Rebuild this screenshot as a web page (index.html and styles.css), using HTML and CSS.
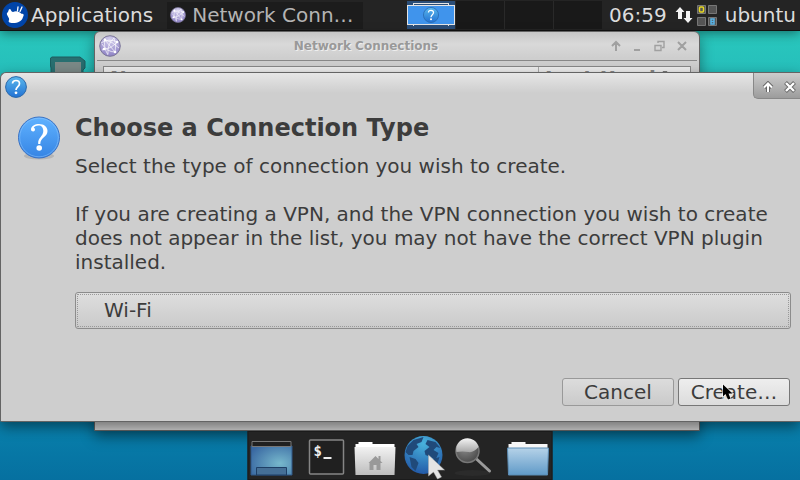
FILE: index.html
```html
<!DOCTYPE html>
<html lang="en">
<head>
<meta charset="utf-8">
<title>Choose a Connection Type</title>
<link rel="stylesheet" href="styles.css">
</head>
<body>
<svg class="defs" aria-hidden="true">
  <defs>
    <linearGradient id="blue" x1="0" y1="0" x2="0" y2="1"><stop offset="0" stop-color="#60b2ff"/><stop offset="1" stop-color="#3584e4"/></linearGradient>
    <linearGradient id="sky" x1="0" y1="0" x2="0" y2="1"><stop offset="0" stop-color="#5bb8ec"/><stop offset="1" stop-color="#2272d4"/></linearGradient>
    <radialGradient id="violet" cx=".5" cy=".2" r=".8"><stop offset="0" stop-color="#d5d0ee"/><stop offset="1" stop-color="#8d81c4"/></radialGradient>
    <radialGradient id="screen" cx=".7" cy=".6" r=".8"><stop offset="0" stop-color="#77b8cc"/><stop offset="1" stop-color="#3968a2"/></radialGradient>
    <linearGradient id="paper" x1="0" y1="0" x2="0" y2="1"><stop offset="0" stop-color="#f2f2f2"/><stop offset="1" stop-color="#bdbdbd"/></linearGradient>
    <linearGradient id="folder" x1="0" y1="0" x2="0" y2="1"><stop offset="0" stop-color="#b5d2e8"/><stop offset="1" stop-color="#609ac8"/></linearGradient>
    <radialGradient id="ocean" cx=".5" cy=".2" r=".8"><stop offset="0" stop-color="#48b2dc"/><stop offset="1" stop-color="#235aa8"/></radialGradient>
    <radialGradient id="lens" cx=".4" cy=".35" r=".7"><stop offset="0" stop-color="#8c8c8c"/><stop offset="1" stop-color="#484848"/></radialGradient>
    <linearGradient id="glare" x1="0" y1="0" x2="0" y2="1"><stop offset="0" stop-color="#f4f4f4"/><stop offset="1" stop-color="#a6a6a6"/></linearGradient>
    <symbol id="question" viewBox="0 0 44 44">
      <ellipse cx="22" cy="40" rx="15" ry="3.500" fill="#000" opacity=".12"/>
      <circle cx="22" cy="21.500" r="20.500" fill="url(#blue)" stroke="#3a72c4"/>
      <circle cx="22" cy="21.500" r="19.300" fill="none" stroke="#8fc8ff" stroke-opacity=".5"/>
      <path d="M14 13.500C14 10 18 8 22 8C27 8 30.500 10.800 30.500 15C30.500 21 23.300 21.500 23.300 28H21.200C20.500 21.500 26.300 20.500 26.300 15C26.300 11.500 24.500 9.500 21.500 9.500C19 9.500 17.200 10.600 16.700 11.800C18.500 12 18.500 15.500 16.200 15.500C14.900 15.500 14 14.600 14 13.500Z" fill="#fff"/>
      <circle cx="22.200" cy="32" r="2.800" fill="#fff"/>
    </symbol>
    <symbol id="question-small" viewBox="0 0 22 22">
      <circle cx="11" cy="11" r="10.400" fill="url(#sky)" stroke="#2a68aa"/>
      <path d="M7.500 7.500C7.500 3.500 14.500 3.500 14.500 7.700C14.500 10.500 11 10.700 11 14" fill="none" stroke="#fff" stroke-width="1.700"/>
      <circle cx="11" cy="16.800" r="1.400" fill="#fff"/>
    </symbol>
    <symbol id="network" viewBox="0 0 22 22">
      <circle cx="11" cy="11" r="10.300" fill="url(#violet)" stroke="#7c7799"/>
      <g fill="none" stroke="#fff" stroke-opacity=".85" stroke-width=".8"><path d="M2 8Q9 3 19 7M6 3Q4 12 9 20M3 15Q12 14 19 7M6 5L16 17M15 3Q18 10 16 17M3 9Q8 17 16 17M6 5Q13 6 20 13M9 19Q8 9 15 3"/></g>
      <g fill="#fff"><circle cx="6" cy="5" r="1.300"/><circle cx="18" cy="7" r="1.300"/><circle cx="16" cy="17" r="1.300"/><circle cx="5" cy="14" r="1.300"/></g>
    </symbol>
  </defs>
</svg>

<header class="panel">
  <button class="menu-button">
    <svg class="logo" viewBox="0 0 26 26" aria-hidden="true"><circle cx="13" cy="13" r="13" fill="#0044a8"/><path d="M5 11C7 10 6 7 8 7C9 7 9 10 11 10C13 9 15 9 17 10L20 12C22 11 22 14 21 15C20 19 16 21 11 21C7 21 6 20 7 18C8 16 4 13 5 11Z" fill="#fff"/><path d="M15.500 9L16 5M18 9.500L20 5" stroke="#fff" stroke-width="1.300" stroke-linecap="round"/></svg>
    <span>Applications</span>
  </button>
  <button class="task"><svg class="task-icon" aria-hidden="true"><use href="#network"/></svg><span>Network Conn…</span></button>
  <div class="status">
    <nav class="pager" aria-label="Workspaces">
      <button class="workspace current" aria-label="Workspace 1"><span class="mini"><svg class="mini-icon" aria-hidden="true"><use href="#question-small"/></svg></span></button>
      <button class="workspace" aria-label="Workspace 2"></button>
      <button class="workspace" aria-label="Workspace 3"></button>
      <button class="workspace" aria-label="Workspace 4"></button>
    </nav>
    <time class="clock">06:59</time>
    <div class="tray">
      <svg class="arrows" viewBox="0 0 18 18" aria-hidden="true"><path d="M5 1L9.500 6H7V13H3V6H.5ZM13 17L8.500 12H11V5H15V12H17.500Z" fill="#f2f2f2"/></svg>
      <svg class="lights" viewBox="0 0 20 21" aria-hidden="true"><g fill="#555" stroke="#777"><path d="M.5.5h8v8h-8zM11.500.5h8v8h-8zM.5 12.500h8v8h-8zM11.500 12.500h8v8h-8z"/></g><rect x="2.500" y="2" width="4" height="5" rx="1" fill="none" stroke="#e8d820" stroke-width="1.500"/><path d="M14 14v5h3v-5zM14 16.500h3" fill="none" stroke="#58b4e8" stroke-width="1.500"/></svg>
    </div>
    <button class="user">ubuntu</button>
  </div>
</header>

<main class="desktop">
  <svg class="card" viewBox="0 0 36 44" aria-hidden="true"><path d="M2 1H30L35 5V12L33 14V43H1V12L.5 10V2Z" fill="#286f70" stroke="#1c5c5e"/><path d="M5 6H31V43H5Z" fill="#7b8987"/></svg>

  <section class="window back" aria-label="Network Connections">
    <div class="back-bar">
      <svg class="net-icon" aria-hidden="true"><use href="#network"/></svg>
      <h2 class="back-title">Network Connections</h2>
      <svg class="back-controls" viewBox="0 0 76 12" aria-hidden="true"><g fill="none" stroke="#a0a0a0" stroke-width="2"><path d="M5 11V3M1 6L5 2L9 6M23 10H29M67 2L75 10M75 2L67 10"/><path d="M44 5.500H50V10.500H44ZM47 3V1.500H53V7.500H51" stroke-width="1.400"/></g></svg>
    </div>
    <div class="back-list"><span>Name</span><span>Last Used <svg class="sort" viewBox="0 0 10 8" aria-hidden="true"><path d="M3 0H7L10 8H0Z" fill="#777"/></svg></span></div>
  </section>

  <section class="window dialog" role="dialog" aria-labelledby="heading">
    <div class="title-bar">
      <svg class="bar-icon" aria-hidden="true"><use href="#question-small"/></svg>
      <div class="controls">
        <button aria-label="Shade"><svg viewBox="0 0 12 12"><path d="M6 11V3M2 6.500L6 2.500L10 6.500" fill="none" stroke="#666" stroke-width="4"/><path d="M6 11V3M2 6.500L6 2.500L10 6.500" fill="none" stroke="#fff" stroke-width="2"/></svg></button>
        <button aria-label="Close"><svg viewBox="0 0 12 12"><path d="M1.500 1.500L10.500 10.500M10.500 1.500L1.500 10.500" fill="none" stroke="#666" stroke-width="4"/><path d="M2 2L10 10M10 2L2 10" fill="none" stroke="#fff" stroke-width="2.400"/></svg></button>
      </div>
    </div>
    <form class="content">
      <svg class="big-icon" aria-hidden="true"><use href="#question"/></svg>
      <div class="body">
        <h1 id="heading">Choose a Connection Type</h1>
        <p><label for="type">Select the type of connection you wish to create.</label></p>
        <p>If you are creating a VPN, and the VPN connection you wish to create does not appear in the list, you may not have the correct VPN plugin installed.</p>
        <div class="field"><select id="type"><option>Wi-Fi</option></select></div>
      </div>
      <div class="actions">
        <button type="button" class="action">Cancel</button>
        <button type="button" class="action primary">Create…</button>
      </div>
    </form>
  </section>

  <nav class="dock" aria-label="Launchers">
    <button aria-label="Show desktop"><svg viewBox="0 0 42 42"><path d="M.5 8H41.500V37H.5Z" fill="url(#screen)" stroke="#315987"/><path d="M1.500 3.500H40.500V8.500H1.500Z" fill="#202020" stroke="#777"/><path d="M6 37V29.500H36V37Z" fill="#456f96" stroke="#1e3f66"/></svg></button>
    <button class="gap" aria-label="Terminal"><svg viewBox="0 0 42 42"><rect x="4" y="2" width="34" height="34" rx="1" fill="#202020" stroke="#858585" stroke-width="1.500"/><path d="M18 20H26" stroke="#eee" stroke-width="2"/><text x="8" y="18" class="prompt">$</text></svg></button>
    <button aria-label="Home"><svg viewBox="0 0 42 42"><path d="M1 9V6H4V4H18V6H40V9Z" fill="#fff"/><path d="M0 9H41L40 37H1Z" fill="url(#paper)"/><path d="M14 25L21 18L24 21V18H26V23L28 25H26V32H22V27H19V32H15V25Z" fill="#999"/></svg></button>
    <button aria-label="Web browser"><svg viewBox="0 0 42 42"><circle cx="20" cy="17" r="19" fill="url(#ocean)"/><path d="M4 8L10 2L20 -1L18 4L13 6L15 9L10 13L9 17L5 17L2 14ZM24 2L32 4L37 10L33 9L30 12L35 15L32 22L27 19L22 17L21 13L26 9L22 6ZM6 19L12 21L15 25L12 33L8 29ZM27 22L36 19L32 32L28 33Z" fill="#204a7a"/><path d="M25 17V38L30 34L34 41L38 39L34 32H41Z" fill="#e4e4e4" stroke="#aaa" stroke-width=".5"/></svg></button>
    <button aria-label="Application finder"><svg viewBox="0 0 42 42"><ellipse cx="20" cy="35" rx="18" ry="3" fill="#2b2b2b"/><path d="M24 21L37 33" stroke="#9b9b9b" stroke-width="3" stroke-linecap="round"/><circle cx="15" cy="13" r="11.500" fill="url(#lens)" stroke="#777" stroke-width="1.500"/><path d="M4 14A11 11 0 0 1 26 9Q21 15 16 14Q10 13 4 14Z" fill="url(#glare)"/></svg></button>
    <button class="gap" aria-label="File manager"><svg viewBox="0 0 42 42"><path d="M1 10V6H4V4H18V6H40V10Z" fill="#f6f6f6"/><path d="M0 10H41L40 37H1Z" fill="url(#folder)" stroke="#5d8eb6"/></svg></button>
  </nav>

  <svg class="pointer" viewBox="0 0 12 17" aria-hidden="true"><path d="M1 .5V12.500L3.500 10L6 15.500L8.500 14.500L6.500 9.500H10.500Z" fill="#000" stroke="#fff" stroke-width="1.600" paint-order="stroke" stroke-opacity=".7"/></svg>
</main>
</body>
</html>
```

FILE: styles.css
```css
* { box-sizing: border-box; }

body {
  margin: 0;
  min-height: 100vh;
  display: flex;
  flex-direction: column;
  overflow: hidden;
  font: 20px/24px "DejaVu Sans", sans-serif;
  color: #3c3c3c;
  background: linear-gradient(#29c8bd 30px, #26bfbb 70px, #087eaa 430px, #0670a0 480px);
}

button, select { font: inherit; color: inherit; }
button { padding: 0; border: 0; background: none; }
svg { display: block; flex: none; }
.defs { position: absolute; width: 0; height: 0; }

.panel {
  height: 31px;
  display: flex;
  align-items: center;
  color: #dcdcdc;
  background: #242424;
  border-bottom: 1px solid #111;
  box-shadow: 0 2px 12px #0007;
}
.menu-button { display: flex; align-items: center; gap: 3px; padding-left: 2px; }
.logo { width: 26px; height: 26px; }
.task {
  display: flex;
  align-items: center;
  gap: 6px;
  height: 27px;
  width: 196px;
  margin-left: 14px;
  padding-left: 3px;
  color: #b4b4b4;
  background: #1c1c1c;
}
.task-icon { width: 16px; height: 16px; }
.status { display: flex; align-items: center; margin-left: auto; padding-right: 4px; }
.pager { display: flex; gap: 1px; margin-right: 7px; background: #292929; }
.workspace { width: 48px; height: 28px; background: #191919; }
.current { display: flex; align-items: center; background: #2b4e78; }
.mini {
  display: flex;
  justify-content: center;
  align-items: center;
  width: 48px;
  height: 20px;
  background: #4094ec;
  border: 1px solid #e4e4e4;
  position: relative;
}
.mini::before, .mini::after {
  content: "";
  position: absolute;
  left: 5px;
  right: 5px;
  height: 2px;
  border: 1px solid #e4e4e4;
  border-bottom: 0;
}
.mini::before { top: -3px; }
.mini::after { bottom: -2px; height: 1px; }
.mini-icon { width: 16px; height: 16px; }
.tray { display: flex; align-items: center; gap: 4px; margin: 0 8px; }
.arrows { width: 18px; height: 18px; }
.lights { width: 20px; height: 21px; }

.card { position: absolute; left: 50px; top: 56px; width: 36px; height: 44px; }

.window { position: absolute; background: #cecece; border: 1px solid #646464; }
.back {
  left: 94px;
  right: 100px;
  top: 31px;
  bottom: 49px;
  border-radius: 6px 6px 0 0;
  background: linear-gradient(#c6c6c6, #d9d9d9 12px, #cecece 26px);
  box-shadow: 0 6px 14px #0006;
}
.back-bar {
  display: flex;
  align-items: center;
  height: 29px;
  margin: 0 2px;
  padding: 0 10px 0 2px;
  border-bottom: 1px solid #888;
}
.net-icon { width: 22px; height: 22px; }
.back-title {
  flex: 1;
  margin: 0;
  text-align: center;
  font-size: 12px;
  color: #999;
  text-shadow: 1px 1px #eee;
}
.back-controls { width: 76px; height: 12px; }
.back-list {
  display: grid;
  grid-template-columns: 1fr 152px;
  margin: 5px 8px;
  border: 1px solid #888;
  background: #eee;
  color: #888;
  font-weight: bold;
  line-height: 22px;
}
.back-list span { display: flex; gap: 4px; padding-left: 6px; }
.back-list span + span { border-left: 1px solid #aaa; }
.sort { width: 10px; height: 8px; margin-top: 4px; }

.dialog {
  left: 0;
  right: 0;
  top: 72px;
  border-right: 0;
  border-radius: 6px 0 0 2px;
  background: linear-gradient(#e6e6e6, #cecece 20px);
  box-shadow: 0 5px 14px #0007;
}
.title-bar { display: flex; justify-content: space-between; }
.bar-icon { width: 22px; height: 22px; margin: 3px 4px; }
.controls {
  display: flex;
  align-items: center;
  gap: 10px;
  height: 26px;
  padding: 2px 4px 0 8px;
  border-left: 1px solid #888;
  border-bottom: 1px solid #888;
  border-bottom-left-radius: 5px;
  background: linear-gradient(#ccc, #9c9c9c);
}
.controls svg { width: 12px; height: 12px; }

.content {
  display: grid;
  grid-template-columns: 44px 1fr;
  column-gap: 14px;
  padding: 15px 9px 15px 16px;
}
.big-icon { width: 44px; height: 44px; }
h1 { margin: 0; font-size: 24px; line-height: 24px; }
p { margin: 14px 0 24px; }
p + p { margin: 0; }
.field { margin-top: 18px; }
select {
  display: block;
  width: 100%;
  height: 37px;
  padding: 0 28px 2px;
  appearance: none;
  border: 1px solid #8c8c8c;
  border-radius: 3px;
  background: linear-gradient(#dedede, #cacaca);
  outline: 1px dotted #999;
  outline-offset: -3px;
}
.actions {
  grid-column: 1 / -1;
  display: flex;
  justify-content: flex-end;
  gap: 4px;
  margin-top: 49px;
  padding-right: 1px;
}
.action {
  width: 112px;
  height: 28px;
  border: 1px solid #999;
  border-radius: 3px;
  background: linear-gradient(#dcdcdc, #cacaca);
}
.primary { border-color: #777; background: linear-gradient(#eee, #dcdcdc); }

.dock {
  position: absolute;
  bottom: 0;
  left: 50%;
  transform: translateX(-50%);
  display: flex;
  gap: 7px;
  padding: 6px 2px 0;
  height: 49px;
  background: #242424;
  border: 1px solid #1b1b1b;
}
.dock svg { width: 42px; height: 42px; overflow: visible; }
.gap { margin-left: 6px; }
.prompt { font: bold 14px "DejaVu Sans Mono", monospace; fill: #eee; }
.pointer { position: absolute; left: 722px; top: 384px; width: 12px; height: 17px; }
```
